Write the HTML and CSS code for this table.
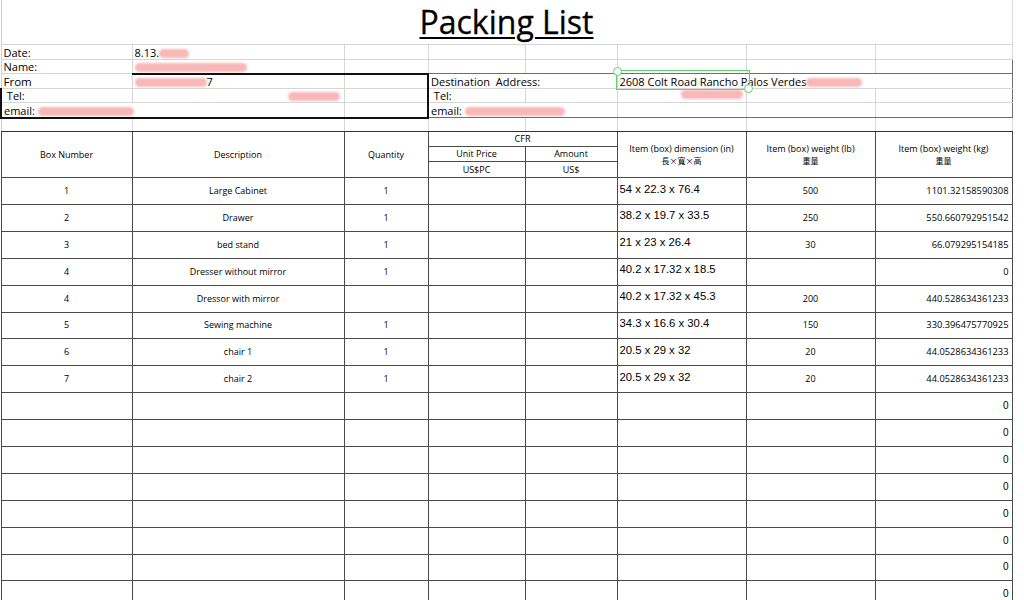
FILE: index.html
```html
<!DOCTYPE html>
<html lang="en">
<head>
<meta charset="utf-8">
<title>Packing List</title>
<link rel="stylesheet" href="styles.css">
</head>
<body>
<div class="sheet">
  <table class="grid">
    <colgroup>
      <col class="c1"><col class="c2"><col class="c3"><col class="c4"><col class="c5"><col class="c6"><col class="c7"><col class="c8">
    </colgroup>
    <tbody class="info">
      <tr class="r-title"><td colspan="8" class="title"><span class="title-text">Packing List</span></td></tr>
      <tr class="r-a"><td>Date:</td><td>8.13.<span class="redact w-date"></span></td><td></td><td></td><td></td><td></td><td></td><td></td></tr>
      <tr class="r-b"><td>Name:</td><td class="bb-dark"><span class="redact w-name"></span></td><td class="bb-dark"></td><td class="bb-gray"></td><td class="bb-gray"></td><td class="bb-gray"></td><td class="bb-gray"></td><td class="bb-gray br-gray"></td></tr>
      <tr class="r-a"><td class="big">From</td><td><span class="redact w-from"></span>7</td><td class="br-dark"></td><td colspan="2">Destination&nbsp; Address:</td><td colspan="3" class="br-gray addr">2608 Colt Road Rancho Palos Verdes<span class="redact w-zip"></span></td></tr>
      <tr class="r-b"><td class="bl-dark">&nbsp;Tel:</td><td class="right"><span class="redact w-tel"></span></td><td class="br-dark"></td><td>&nbsp;Tel:</td><td></td><td class="right"><span class="redact w-tel2"></span></td><td></td><td class="br-gray"></td></tr>
      <tr class="r-a"><td colspan="2" class="bl-dark bb-dark">email: <span class="redact w-mail"></span></td><td class="bb-dark br-dark"></td><td colspan="2" class="bb-gray">email: <span class="redact w-mail2"></span></td><td class="bb-gray"></td><td class="bb-gray"></td><td class="bb-gray br-gray"></td></tr>
      <tr class="r-b r-sep"><td></td><td></td><td></td><td></td><td></td><td></td><td></td><td></td></tr>
    </tbody>
    <tbody class="main">
      <tr class="h1"><td rowspan="3">Box Number</td><td rowspan="3">Description</td><td rowspan="3">Quantity</td><td colspan="2">CFR</td><td rowspan="3" class="hd">Item (box) dimension (in)<br><span class="cjk">長×寬×高</span></td><td rowspan="3" class="hd">Item (box) weight (lb)<br><span class="cjk">重量</span></td><td rowspan="3" class="hd">Item (box) weight (kg)<br><span class="cjk">重量</span></td></tr>
      <tr class="h2"><td>Unit Price</td><td>Amount</td></tr>
      <tr class="h3"><td>US$PC</td><td>US$</td></tr>
      <tr class="row"><td>1</td><td>Large Cabinet</td><td>1</td><td></td><td></td><td class="dim">54 x 22.3 x 76.4</td><td>500</td><td class="kg">1101.32158590308</td></tr>
      <tr class="row"><td>2</td><td>Drawer</td><td>1</td><td></td><td></td><td class="dim">38.2 x 19.7 x 33.5</td><td>250</td><td class="kg">550.660792951542</td></tr>
      <tr class="row"><td>3</td><td>bed stand</td><td>1</td><td></td><td></td><td class="dim">21 x 23 x 26.4</td><td>30</td><td class="kg">66.079295154185</td></tr>
      <tr class="row"><td>4</td><td>Dresser without mirror</td><td>1</td><td></td><td></td><td class="dim">40.2 x 17.32 x 18.5</td><td></td><td class="kg">0</td></tr>
      <tr class="row"><td>4</td><td>Dressor with mirror</td><td></td><td></td><td></td><td class="dim">40.2 x 17.32 x 45.3</td><td>200</td><td class="kg">440.528634361233</td></tr>
      <tr class="row"><td>5</td><td>Sewing machine</td><td>1</td><td></td><td></td><td class="dim">34.3 x 16.6 x 30.4</td><td>150</td><td class="kg">330.396475770925</td></tr>
      <tr class="row"><td>6</td><td>chair 1</td><td>1</td><td></td><td></td><td class="dim">20.5 x 29 x 32</td><td>20</td><td class="kg">44.0528634361233</td></tr>
      <tr class="row"><td>7</td><td>chair 2</td><td>1</td><td></td><td></td><td class="dim">20.5 x 29 x 32</td><td>20</td><td class="kg">44.0528634361233</td></tr>
      <tr class="row"><td></td><td></td><td></td><td></td><td></td><td></td><td></td><td class="zero">0</td></tr>
      <tr class="row"><td></td><td></td><td></td><td></td><td></td><td></td><td></td><td class="zero">0</td></tr>
      <tr class="row"><td></td><td></td><td></td><td></td><td></td><td></td><td></td><td class="zero">0</td></tr>
      <tr class="row"><td></td><td></td><td></td><td></td><td></td><td></td><td></td><td class="zero">0</td></tr>
      <tr class="row"><td></td><td></td><td></td><td></td><td></td><td></td><td></td><td class="zero">0</td></tr>
      <tr class="row"><td></td><td></td><td></td><td></td><td></td><td></td><td></td><td class="zero">0</td></tr>
      <tr class="row"><td></td><td></td><td></td><td></td><td></td><td></td><td></td><td class="zero">0</td></tr>
      <tr class="row"><td></td><td></td><td></td><td></td><td></td><td></td><td></td><td class="zero">0</td></tr>
    </tbody>
  </table>
  <div class="selection"></div>
</div>
</body>
</html>
```

FILE: styles.css
```css
* { box-sizing: border-box; }

body {
  margin: 0;
  background: #fff;
  color: #000;
  font-family: "Comic Sans MS", "Open Sans", "Noto Sans CJK TC", sans-serif;
}

.sheet {
  position: relative;
  width: 1024px;
  height: 600px;
  overflow: hidden;
}

.grid {
  border-collapse: collapse;
  table-layout: fixed;
  width: 1011px;
}

.c1 { width: 131px; }
.c2 { width: 212px; }
.c3 { width: 84px; }
.c4 { width: 97px; }
.c5 { width: 92px; }
.c6 { width: 129px; }
.c7 { width: 129px; }
.c8 { width: 137px; }

.grid td {
  border: none;
  border-right: 1px solid #d6d6d6;
  border-bottom: 1px solid #d6d6d6;
  padding: 0 2px;
  white-space: nowrap;
  overflow: hidden;
}

.grid td:first-child { border-left: 1px solid #d0d0d0; }

/* title row */
.r-title td { height: 44px; }
.title {
  text-align: center;
  vertical-align: top;
  padding-top: 0;
}
.title-text {
  font-size: 32px;
  line-height: 44px;
  text-decoration: underline;
  text-decoration-thickness: 2px;
  text-underline-offset: 3px;
  -webkit-text-stroke: 0.3px #000;
}

/* info rows */
.info td {
  font-size: 11px;
  line-height: 12px;
  vertical-align: bottom;
}
.info .big { font-size: 11.5px; }
.r-a td { height: 15px; }
.r-b td { height: 14px; }

.right { text-align: right; }
.center { text-align: center; }
.addr { padding-left: 3px; }

.bb-dark { border-bottom: 2px solid #111 !important; }
.br-dark { border-right: 2px solid #111 !important; }
.bl-dark { border-left: 2px solid #111 !important; }
.bb-gray { border-bottom: 1px solid #6e6e6e !important; }
.br-gray { border-right: 1px solid #6e6e6e !important; }

.r-sep td { border-bottom: 1px solid #333; }

/* redacted text */
.redact {
  display: inline-block;
  height: 9px;
  margin-bottom: 1px;
  background: #f9b8b8;
  border-radius: 5px;
  filter: blur(1.3px);
  vertical-align: middle;
}
.w-date { width: 30px; }
.w-name { width: 112px; }
.w-from { width: 72px; }
.w-tel { width: 52px; margin-right: 2px; }
.w-tel2 { width: 62px; margin-right: 1px; margin-bottom: 3px; }
.w-mail { width: 96px; }
.w-mail2 { width: 100px; }
.w-zip { width: 56px; }

/* main table */
.main td {
  border-right: 1px solid #4a4a4a;
  border-bottom: 1px solid #4a4a4a;
  font-size: 9px;
  line-height: 12px;
  text-align: center;
  vertical-align: middle;
}
.main td:first-child { border-left: 1px solid #4a4a4a; }

.h1 td { height: 15px; }
.h2 td { height: 15px; }
.h3 td { height: 16px; }
.hd { line-height: 12px; padding-bottom: 2px; }
.cjk {
  font-family: "Noto Sans CJK TC", sans-serif;
  font-size: 8px;
}

.row td { height: 26.9px; }

.main .dim {
  text-align: left;
  font-family: "Liberation Sans", Arial, sans-serif;
  font-size: 11.3px;
  padding: 0 2px 5px 2px;
}
.main .kg {
  text-align: right;
  font-size: 9.3px;
  padding-right: 3px;
}
.main .zero {
  text-align: right;
  font-family: "Liberation Sans", Arial, sans-serif;
  font-size: 10px;
  padding-right: 3px;
}

/* selected cell overlay */
.selection {
  position: absolute;
  left: 616px;
  top: 70px;
  width: 134px;
  height: 20px;
  border: 1px solid #5cd16c;
  pointer-events: none;
}
.selection::before,
.selection::after {
  content: "";
  position: absolute;
  width: 7px;
  height: 7px;
  border: 1px solid #5cd16c;
  border-radius: 50%;
  background: #fff;
}
.selection::before { left: -4px; top: -4px; }
.selection::after { right: -4px; bottom: -4px; }
```
